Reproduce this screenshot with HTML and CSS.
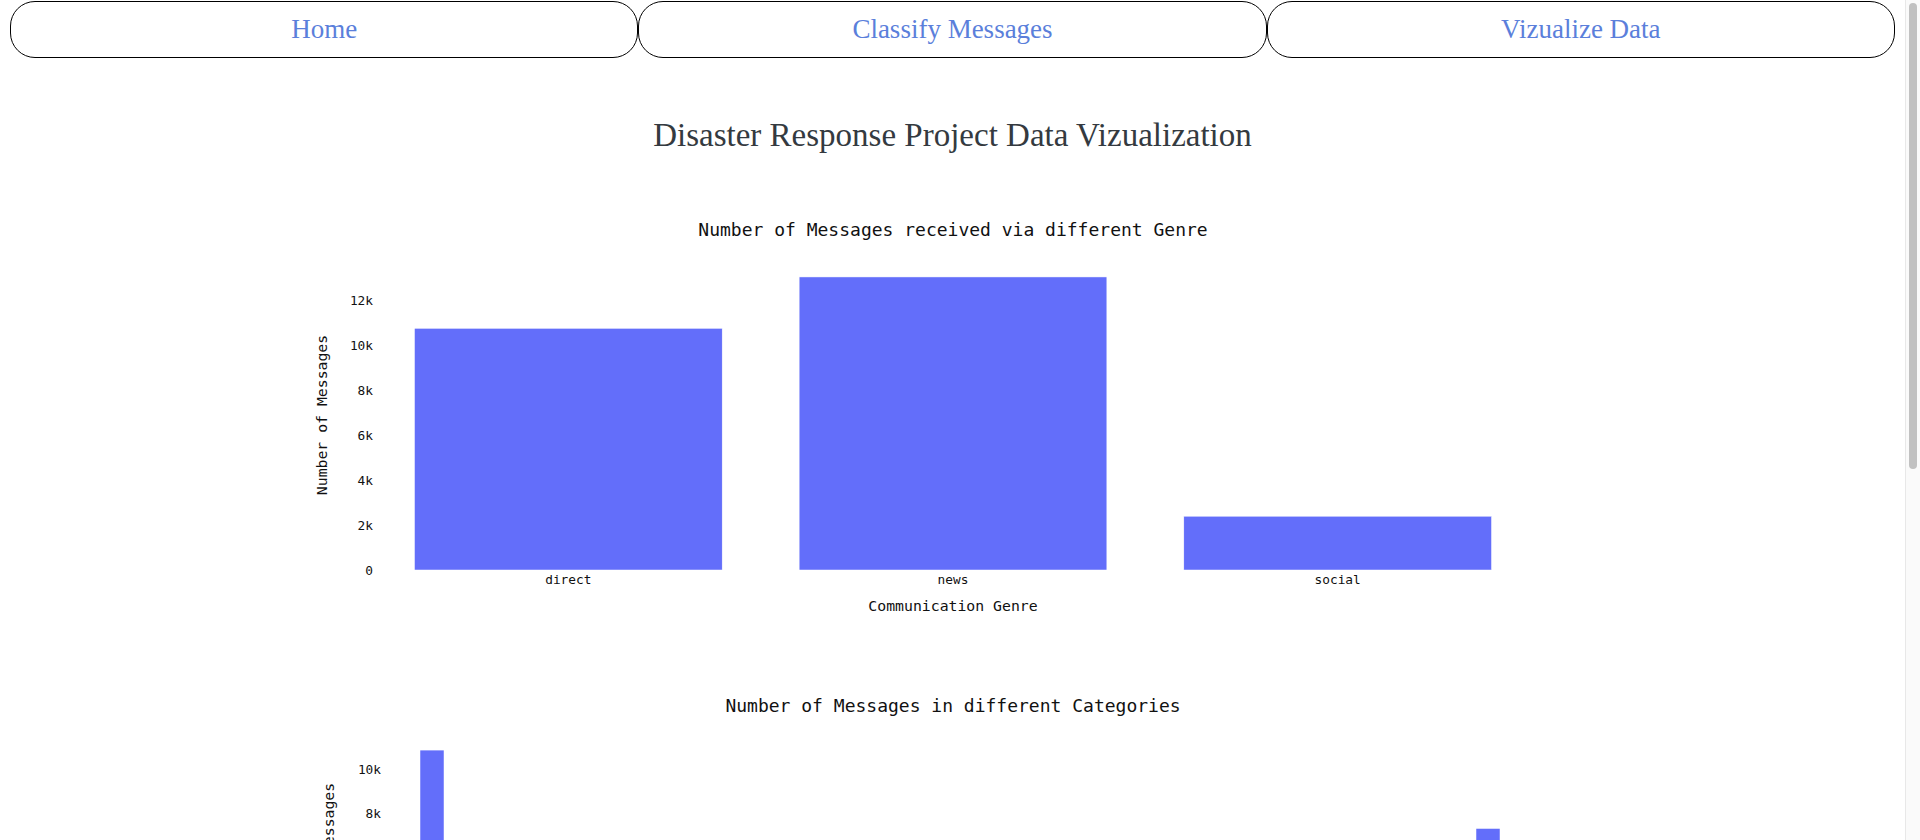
FILE: index.html
```html
<!DOCTYPE html>
<html lang="en">
<head>
  <meta charset="UTF-8" />
  <meta name="viewport" content="width=device-width, initial-scale=1.0"/>
  <title>Disaster Response Project</title>
  <link rel="stylesheet" href="styles.css">
</head>
<body>

  <nav class="menu">
    <a href="#" class="menu-item">Home</a>
    <a href="#" class="menu-item">Classify Messages</a>
    <a href="#" class="menu-item">Vizualize Data</a>
  </nav>

  <h1 class="page-title">Disaster Response Project Data Vizualization</h1>

  <div class="chart chart-genre">
    <svg id="chart-genre" width="1905" height="490" viewBox="0 0 1905 490"></svg>
  </div>

  <div class="chart chart-categories">
    <svg id="chart-categories" width="1905" height="620" viewBox="0 0 1905 620"></svg>
  </div>

  <div class="scrollbar"><div class="scrollbar-thumb"></div></div>

  <script src="script.js"></script>
</body>
</html>
```

FILE: styles.css
```css
* {
  box-sizing: border-box;
}

html {
  overflow-x: hidden;
}

body {
  margin: 0 15px 0 0;
  background-color: #fff;
}

.menu {
  display: flex;
  padding: 1px 10px 0;
}

.menu-item {
  flex: 1;
  height: 57px;
  display: flex;
  align-items: center;
  justify-content: center;
  border: 1px solid #000;
  border-radius: 25px;
  font-family: "Liberation Serif", serif;
  font-size: 27px;
  color: #5b7fdb;
  text-decoration: none;
}

.page-title {
  margin: 58px 0 0;
  font-family: "Liberation Serif", serif;
  font-size: 33px;
  line-height: 38px;
  font-weight: normal;
  color: #343a40;
  text-align: center;
}

.chart svg {
  display: block;
  margin: 0 auto;
}

.chart-genre {
  margin-top: 6px;
}

.chart-categories {
  margin-bottom: 260px;
}

.chart text {
  font-family: "DejaVu Sans Mono", monospace;
  fill: #111;
}

.chart-title {
  font-size: 18px;
  text-anchor: middle;
}

.axis-title {
  font-size: 14.8px;
  text-anchor: middle;
}

.tick {
  font-size: 12.8px;
}

.tick-y {
  text-anchor: end;
}

.tick-x {
  text-anchor: middle;
}

.tick-x-rot {
  text-anchor: end;
}

.bar {
  fill: #636efa;
  stroke: #fff;
  stroke-width: 0.5;
}

/* window scrollbar as it shows in the screenshot */
.scrollbar {
  position: fixed;
  top: 0;
  right: 0;
  width: 15px;
  height: 100vh;
  background-color: #fafafa;
  border-left: 1px solid #e8e8e8;
}

.scrollbar-thumb {
  margin: 3px 0 0 3px;
  width: 8px;
  height: 466px;
  border-radius: 4px;
  background-color: #c1c1c1;
}
```

FILE: script.js
```js
const SVG_NS = 'http://www.w3.org/2000/svg';

function make(tag, attrs, text) {
  const node = document.createElementNS(SVG_NS, tag);
  for (const key in attrs) node.setAttribute(key, attrs[key]);
  if (text !== undefined) node.textContent = text;
  return node;
}

function kLabel(v) {
  return v === 0 ? '0' : (v / 1000) + 'k';
}

function drawChart(svg, c) {
  const n = c.values.length;
  const band = c.band || (c.right - c.left) / n;
  const barWidth = c.barWidth || band * 0.8;

  svg.appendChild(make('text', { x: 953, y: c.titleY, 'class': 'chart-title' }, c.title));

  c.ticks.forEach(t => {
    const y = c.zero - t * c.scale;
    svg.appendChild(make('text', { x: c.tickX, y: y + 4.5, 'class': 'tick tick-y' }, kLabel(t)));
  });

  c.values.forEach((v, i) => {
    const h = v * c.scale;
    const x = c.left + i * band + (band - barWidth) / 2;
    const cx = x + barWidth / 2;
    svg.appendChild(make('rect', { x: x, y: c.zero - h, width: barWidth, height: h, 'class': 'bar' }));

    if (c.rotateLabels) {
      svg.appendChild(make('text', {
        x: 0, y: 4.5, 'class': 'tick tick-x-rot',
        transform: 'translate(' + cx + ' ' + (c.zero + 8) + ') rotate(-90)'
      }, c.labels[i]));
    } else {
      svg.appendChild(make('text', { x: cx, y: c.zero + 13.5, 'class': 'tick tick-x' }, c.labels[i]));
    }
  });

  if (c.xTitle) {
    svg.appendChild(make('text', { x: (c.left + c.left + band * n) / 2, y: c.xTitleY, 'class': 'axis-title' }, c.xTitle));
  }

  svg.appendChild(make('text', {
    x: 0, y: 5, 'class': 'axis-title',
    transform: 'translate(' + c.yTitleX + ' ' + c.yTitleY + ') rotate(-90)'
  }, 'Number of Messages'));
}

drawChart(document.getElementById('chart-genre'), {
  title: 'Number of Messages received via different Genre',
  titleY: 75.5,
  labels: ['direct', 'news', 'social'],
  values: [10766, 13054, 2396],
  left: 376,
  right: 1530,
  zero: 410,
  scale: 0.02245,
  ticks: [0, 2000, 4000, 6000, 8000, 10000, 12000],
  tickX: 373,
  xTitle: 'Communication Genre',
  xTitleY: 451,
  yTitleX: 322,
  yTitleY: 255
});

const categories = {
  aid_centers: 309, aid_related: 10860, buildings: 1333, child_alone: 0,
  clothing: 405, cold: 530, death: 1194, direct_report: 5075,
  earthquake: 2455, electricity: 532, fire: 282, floods: 2155,
  food: 2923, hospitals: 283, infrastructure_related: 1705, medical_help: 2084,
  medical_products: 1313, military: 860, missing_people: 298, money: 604,
  offer: 118, other_aid: 3446, other_infrastructure: 1151, other_weather: 1376,
  refugees: 875, request: 4474, search_and_rescue: 724, security: 471,
  shelter: 2314, shops: 120, storm: 2443, tools: 159,
  transport: 1201, water: 1672, weather_related: 7297
};

drawChart(document.getElementById('chart-categories'), {
  title: 'Number of Messages in different Categories',
  titleY: 61.5,
  labels: Object.keys(categories),
  values: Object.values(categories),
  left: 384,
  band: 32,
  barWidth: 24,
  zero: 339,
  scale: 0.022,
  ticks: [0, 2000, 4000, 6000, 8000, 10000],
  tickX: 381,
  rotateLabels: true,
  xTitle: 'Message Categories',
  xTitleY: 540,
  yTitleX: 329,
  yTitleY: 213
});
```
